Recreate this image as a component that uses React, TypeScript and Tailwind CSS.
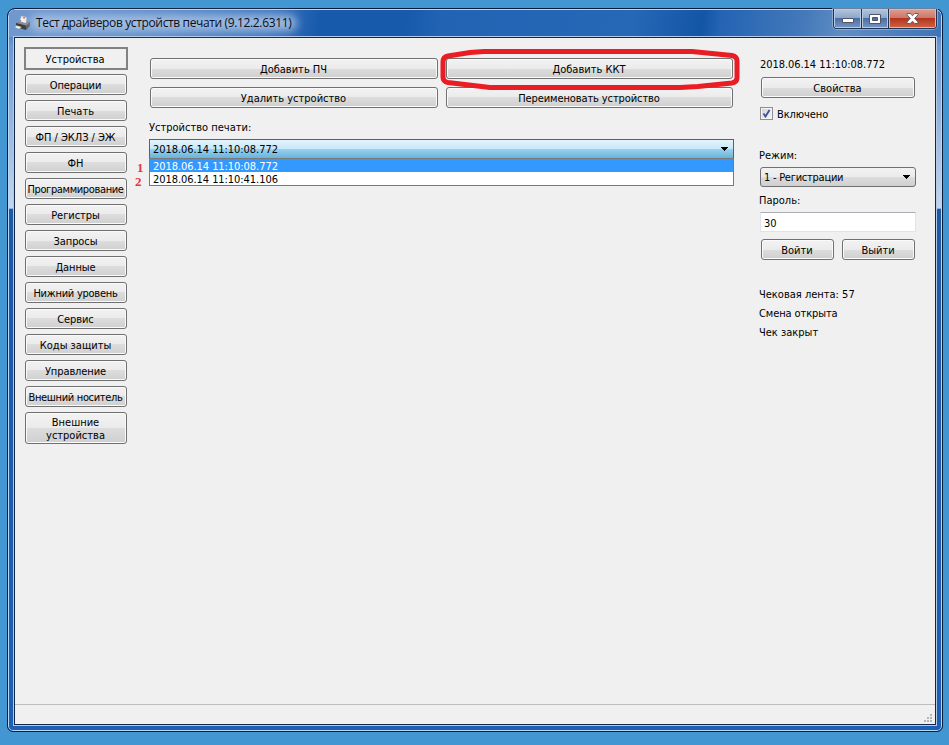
import { ReactNode } from "react";

type PushButtonProps = {
  children: ReactNode;
  className?: string;
};

const navItems = [
  { label: "Операции", tracking: "tracking-[-0.1px]" },
  { label: "Печать", tracking: "tracking-normal" },
  { label: "ФП / ЭКЛЗ / ЭЖ", tracking: "tracking-[-0.05px]" },
  { label: "ФН", tracking: "tracking-normal" },
  { label: "Программирование", tracking: "tracking-[-0.36px]" },
  { label: "Регистры", tracking: "tracking-[-0.05px]" },
  { label: "Запросы", tracking: "tracking-[-0.1px]" },
  { label: "Данные", tracking: "tracking-[-0.1px]" },
  { label: "Нижний уровень", tracking: "tracking-[-0.25px]" },
  { label: "Сервис", tracking: "tracking-[-0.1px]" },
  { label: "Коды защиты", tracking: "tracking-normal" },
  { label: "Управление", tracking: "tracking-[-0.1px]" },
  { label: "Внешний носитель", tracking: "tracking-[-0.32px]" }
];

function PushButton({ children, className = "" }: PushButtonProps) {
  return (
    <button
      type="button"
      className={`flex h-[21px] shrink-0 items-center justify-center rounded-[3px] border border-[#707070] bg-[linear-gradient(180deg,#f2f2f2_0%,#ebebeb_50%,#dddddd_50%,#cfcfcf_100%)] pt-[3px] pr-px leading-[16px] whitespace-nowrap shadow-[inset_0_0_0_1px_#fafafa] ${className}`}
    >
      {children}
    </button>
  );
}

function DropArrow() {
  return (
    <svg width="7" height="4" viewBox="0 0 7 4" shapeRendering="crispEdges">
      <path d="M0 0h7L3.5 4z" fill="#000" />
    </svg>
  );
}

function PrinterIcon() {
  return (
    <svg width="16" height="16" viewBox="0 0 16 16">
      <path d="M5 6 6.5 1l5 1.5L11 7.5z" fill="#f6f6f6" stroke="#ccc" strokeWidth=".5" />
      <path d="M7.5 1.500 10.500 2 10 4 8 3.500z" fill="#e08a7c" />
      <path d="M1 8 5.500 5l9.500 1.500L11 10.500z" fill="#8b8c8f" />
      <path d="M5.500 6.500 7 4.500l4.500 1.500-1 2z" fill="#f4f4f4" />
      <path d="M1 8 11 10.500v4.500L1 12z" fill="#3a3a3c" />
      <path d="M11 10.500l4-4v4.500L11 15z" fill="#56575a" />
      <path d="M1.500 10.500 6.500 12 4 14 0 12.500z" fill="#f2f2f2" stroke="#999" strokeWidth=".4" />
    </svg>
  );
}

function TitleBar() {
  return (
    <div className="flex h-[26px] items-start justify-between pl-[6px]">
      <div className="flex h-[26px] items-center gap-[5px]">
        <PrinterIcon />
        <div className="relative">
          <span className="absolute inset-x-[-6px] inset-y-px rounded-full bg-[#b4cae8]/80 blur-[5px]" />
          <h1 className="relative font-['Open_Sans','Noto_Sans',sans-serif] text-[12px] tracking-[-0.36px] whitespace-nowrap text-[#0a0f1c]">
            Тест драйверов устройств печати (9.12.2.6311)
          </h1>
        </div>
      </div>
      <div className="-mt-px mr-[4px] flex h-[20px] overflow-hidden rounded-b-[4px] border border-t-0 border-[#1f3354] shadow-[0_0_0_1px_rgba(170,195,228,0.6)]">
        <button type="button" className="flex w-[28px] items-center justify-center border-r border-[#1f3354] bg-[linear-gradient(180deg,#b5c5dc_0%,#8ba6cb_48%,#4a6fa5_50%,#7797c2_100%)] pt-[4px] shadow-[inset_0_0_0_1px_#b9cbe2]">
          <svg width="12" height="5" viewBox="0 0 12 5">
            <path d="M.5.5h11v4H.5z" fill="#fff" stroke="#535666" />
          </svg>
        </button>
        <button type="button" className="flex w-[27px] items-center justify-center border-r border-[#1f3354] bg-[linear-gradient(180deg,#b5c5dc_0%,#8ba6cb_48%,#4a6fa5_50%,#7797c2_100%)] shadow-[inset_0_0_0_1px_#b9cbe2]">
          <svg width="12" height="10" viewBox="0 0 12 10">
            <path d="M.5.5h11v9H.5zM3.5 3.500v3h5v-3z" fill="#fff" fillRule="evenodd" stroke="#535666" />
          </svg>
        </button>
        <button type="button" className="flex w-[47px] items-center justify-center bg-[linear-gradient(180deg,#dd9f94_0%,#cd7565_48%,#b5341e_50%,#cf6545_100%)] shadow-[inset_0_0_0_1px_#e5b3a8]">
          <svg width="13" height="11" viewBox="0 0 13 11">
            <path d="M1 .5h3.300l2.200 2.200L8.700.5H12v1.300L8.700 5.400 12 9v1.500H8.700L6.500 8.200l-2.200 2.300H1V9l3.300-3.600L1 1.800z" fill="#fff" stroke="#535666" strokeWidth=".9" />
          </svg>
        </button>
      </div>
    </div>
  );
}

function Sidebar() {
  return (
    <nav className="mt-[9px] ml-[9px] flex w-[104px] flex-col items-center">
      <button type="button" className="mb-1 h-[23px] w-[104px] border-2 border-[#828282] bg-[#f0f0f0] pt-[2px] pr-[2px] leading-[17px]">
        Устройства
      </button>
      <div className="flex flex-col gap-[5px]">
        {navItems.map((item) => (
          <PushButton key={item.label} className={`w-[102px] ${item.tracking}`}>
            {item.label}
          </PushButton>
        ))}
        <button
          type="button"
          className="h-[32px] w-[102px] rounded-[3px] border border-[#707070] bg-[linear-gradient(180deg,#f2f2f2_0%,#ebebeb_50%,#dddddd_50%,#cfcfcf_100%)] pt-px pr-px leading-[13px] shadow-[inset_0_0_0_1px_#fafafa]"
        >
          Внешние
          <br />
          устройства
        </button>
      </div>
    </nav>
  );
}

function DevicePanel() {
  return (
    <main className="mt-5 ml-[21px] w-[585px]">
      <div className="relative grid grid-cols-[288px_287px] gap-x-2 gap-y-2 pl-px">
        <PushButton>Добавить ПЧ</PushButton>
        <PushButton>Добавить ККТ</PushButton>
        <PushButton>Удалить устройство</PushButton>
        <PushButton className="tracking-[-0.1px]">Переименовать устройство</PushButton>
        <svg className="absolute top-[-10px] left-[291px]" width="300" height="43" viewBox="0 0 300 43" fill="none">
          <path
            d="M3 14Q3 9 8 8L30 4.500 44 3.500H252L292 7.500Q297 8.500 297 13V30Q297 34 292 35L258 38.500 240 39.500H50L8 34.500Q3 33.500 3 29Z"
            stroke="#ea1c24"
            strokeWidth="5"
            strokeLinejoin="round"
          />
        </svg>
      </div>
      <p className="mt-3 mb-[5px] h-[14px] leading-[16px]">Устройство печати:</p>
      <div className="flex h-[20px] items-center justify-between border border-[#3c6a86] bg-[linear-gradient(180deg,#e5f4fc_0%,#c8e7f7_48%,#98d1ef_52%,#68b3db_100%)] pr-[5px] pl-[3px]">
        <span className="pt-[2px] tracking-[-0.06px]">2018.06.14 11:10:08.772</span>
        <DropArrow />
      </div>
      <div className="relative -mt-px h-[28px] border border-[#7a7a7a] bg-white leading-[15px] tracking-[-0.06px]">
        <div className="h-[13px] bg-[#3399ff] pl-[3px] text-white outline-1 -outline-offset-1 outline-[#9a8070] outline-dotted">2018.06.14 11:10:08.772</div>
        <div className="h-[13px] pl-[3px]">2018.06.14 11:10:41.106</div>
        <span className="absolute top-[1px] left-[-13px] font-['Liberation_Serif',serif] text-[13px] font-bold text-[#e03838]">1</span>
        <span className="absolute top-[15px] left-[-15px] font-['Liberation_Serif',serif] text-[13px] font-bold text-[#e03838]">2</span>
      </div>
    </main>
  );
}

function StatePanel() {
  return (
    <aside className="mt-[19px] ml-[25px] w-[157px] leading-[16px]">
      <p className="h-[14px] pl-px tracking-[-0.06px]">2018.06.14 11:10:08.772</p>
      <PushButton className="mt-[6px] ml-[2px] w-[154px]">Свойства</PushButton>
      <label className="mt-[9px] ml-px flex h-[13px] items-center gap-1">
        <span className="flex size-[13px] items-center justify-center border border-[#8e8f8f] bg-[linear-gradient(135deg,#cdd2d8,#f6f6f6)] shadow-[inset_0_0_0_1px_#f4f4f4]">
          <svg width="9" height="9" viewBox="0 0 9 9" fill="none">
            <path d="M1.5 4.500 3.500 7.500 7.500 1" stroke="#3c4f9a" strokeWidth="1.8" />
          </svg>
        </span>
        <span className="pt-[2px] tracking-[-0.1px]">Включено</span>
      </label>
      <p className="mt-7 h-[14px]">Режим:</p>
      <div className="mt-[5px] ml-px flex h-[20px] w-[156px] items-center justify-between rounded-[3px] border border-[#707070] bg-[linear-gradient(180deg,#f2f2f2_0%,#ebebeb_50%,#dddddd_50%,#cfcfcf_100%)] pr-[5px] pl-[3px]">
        <span className="pt-[2px] tracking-[-0.25px]">1 - Регистрации</span>
        <DropArrow />
      </div>
      <p className="mt-[6px] h-[14px]">Пароль:</p>
      <input className="mt-[5px] ml-px block h-[20px] w-[156px] rounded-[1px] border border-[#e2e3ea] border-t-[#abadb3] bg-white pt-[2px] pl-[3px]" defaultValue="30" />
      <div className="mt-[7px] ml-[2px] flex gap-2">
        <PushButton className="w-[73px]">Войти</PushButton>
        <PushButton className="w-[73px]">Выйти</PushButton>
      </div>
      <div className="mt-[27px] flex flex-col gap-[5px]">
        <p className="h-[14px]">Чековая лента: 57</p>
        <p className="h-[14px] tracking-[-0.1px]">Смена открыта</p>
        <p className="h-[14px]">Чек закрыт</p>
      </div>
    </aside>
  );
}

function StatusBar() {
  return (
    <footer className="flex h-5 items-end justify-end border-t border-[#bdbdbd] pr-[3px] pb-[2px]">
      <svg width="8" height="8" viewBox="0 0 8 8" fill="#b5b5b5" shapeRendering="crispEdges">
        <path d="M6 0h2v2H6zM3 3h2v2H3zM6 3h2v2H6zM0 6h2v2H0zM3 6h2v2H3zM6 6h2v2H6z" />
      </svg>
    </footer>
  );
}

export default function App() {
  return (
    <div className="h-[745px] w-[949px] overflow-hidden bg-[#4296d2] pt-2 pl-[7px] font-['DejaVu_Sans_Condensed','DejaVu_Sans',sans-serif] text-[11px] text-black">
      <div className="h-[724px] w-[936px] rounded-t-[8px] rounded-b-[6px] border border-[#0b1c38] bg-[linear-gradient(180deg,#1c5cae_0%,#6d98d0_5%,#c3d6ee_27.6%,#1d5aa6_27.7%,#1d5fb4_100%)] p-px shadow-[inset_0_0_0_1px_#b7d9f5]">
        <div className="h-full rounded-t-[6px] bg-[linear-gradient(97deg,#7199cf_0px,#5c8bc9_150px,#3f77be_260px,#1759ab_310px,#1759ab_395px,#2263b3_430px,#2667b6_620px,#1456a6_690px,#2464b3_708px,#4479ba_790px,#5f8dc5_830px,#3d73b8_932px)] bg-[length:100%_27px] bg-no-repeat px-[4px]">
          <div className="-mx-[4px]">
            <TitleBar />
          </div>
          <div className="flex h-[690px] flex-col border border-[#b3cbe8]">
            <div className="flex h-full flex-col border border-[#12264a] bg-[#f0f0f0]">
              <div className="flex min-h-0 flex-1">
                <Sidebar />
                <DevicePanel />
                <StatePanel />
              </div>
              <StatusBar />
            </div>
          </div>
        </div>
      </div>
    </div>
  );
}
